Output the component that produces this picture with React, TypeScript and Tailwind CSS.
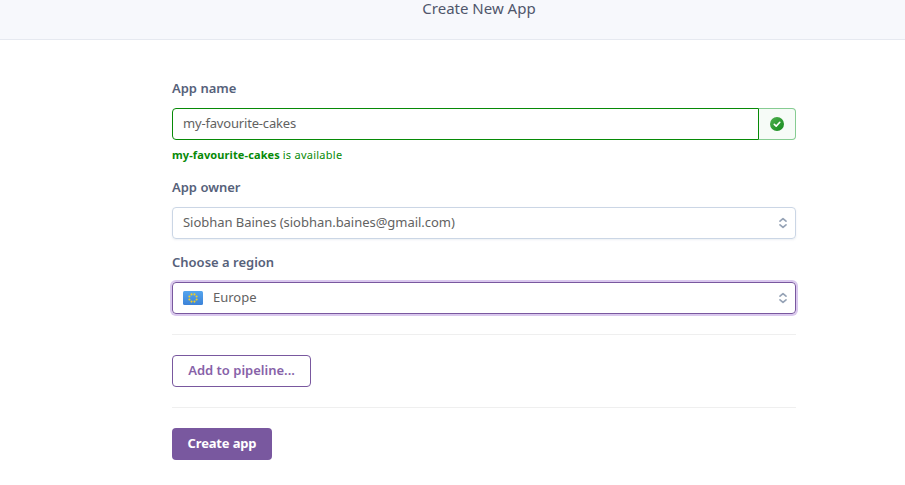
import type { ReactNode } from 'react';

function Label({ children, className = '' }: { children: ReactNode; className?: string }) {
  return (
    <label className={`mb-[10px] block h-5 text-[13px] leading-5 font-semibold text-[#56617a] ${className}`}>
      {children}
    </label>
  );
}

function Chevrons() {
  return (
    <svg
      className="ml-auto shrink-0"
      width="10"
      height="12"
      viewBox="0 0 10 12"
      fill="none"
      stroke="#96a3b6"
      strokeWidth="1.7"
      strokeLinecap="round"
      strokeLinejoin="round"
    >
      <path d="M2 4.2 5 1.7 8 4.2M2 7.8 5 10.3 8 7.8" />
    </svg>
  );
}

const stars = Array.from({ length: 8 }, (_, i) => ({
  x: 10 + 3.9 * Math.cos(((i + 0.5) * Math.PI) / 4),
  y: 7 + 3.9 * Math.sin(((i + 0.5) * Math.PI) / 4),
}));

function EuropeFlag() {
  return (
    <svg className="mr-[10px] shrink-0" width="20" height="14" viewBox="0 0 20 14">
      <defs>
        <linearGradient id="flag" x1="0" y1="0" x2="0" y2="1">
          <stop offset="0" stopColor="#55a5ee" />
          <stop offset="1" stopColor="#3c82d8" />
        </linearGradient>
      </defs>
      <rect width="20" height="14" rx="1.5" fill="url(#flag)" />
      {stars.map((s, i) => (
        <circle key={i} cx={s.x} cy={s.y} r="1.05" fill="#f2cf22" />
      ))}
    </svg>
  );
}

function CheckBadge() {
  return (
    <svg width="14" height="14" viewBox="0 0 14 14">
      <defs>
        <linearGradient id="check" x1="0" y1="0" x2="1" y2="1">
          <stop offset="0" stopColor="#4fb04f" />
          <stop offset="1" stopColor="#148a1c" />
        </linearGradient>
      </defs>
      <circle cx="7" cy="7" r="7" fill="url(#check)" />
      <path
        d="M4.3 7.3 6.2 9.1 9.8 5.3"
        fill="none"
        stroke="#fff"
        strokeWidth="1.6"
        strokeLinecap="round"
        strokeLinejoin="round"
      />
    </svg>
  );
}

export default function App() {
  return (
    <div className="h-[485px] overflow-hidden bg-white font-['Noto_Sans',sans-serif]">
      <header className="flex h-10 justify-center border-b border-[#e6e9f0] bg-[#f7f8fc] pl-[53px]">
        <h1 className="h-4 text-[15px] leading-4 text-[#4f566b]">Create New App</h1>
      </header>

      <main className="ml-[172px] w-[624px] pt-[38px]">
        <Label>App name</Label>
        <div className="flex h-8">
          <div className="flex w-[587px] items-center rounded-l-[4px] border border-[#078a07] px-[10px] text-[13px] tracking-[-0.18px] text-[#626262]">
            <span>my-favourite-cakes</span>
          </div>
          <div className="flex flex-1 items-center justify-center rounded-r-[4px] border border-l-0 border-[#86cc92] bg-[#f6fbf7]">
            <CheckBadge />
          </div>
        </div>
        <p className="mt-[5px] h-5 text-[11px] leading-5 text-[#078a07]">
          <b className="font-bold tracking-[0.11px]">my-favourite-cakes</b>{' '}
          <span className="tracking-[0.25px]">is available</span>
        </p>

        <Label className="mt-3">App owner</Label>
        <div className="flex h-8 items-center rounded-[4px] border border-[#cbd6e5] pr-[7px] pl-[10px] text-[13px] tracking-[-0.03px] text-[#626262] shadow-[0_1px_2px_rgba(100,120,160,0.12)]">
          <span>Siobhan Baines (siobhan.baines@gmail.com)</span>
          <Chevrons />
        </div>

        <Label className="mt-[13px]">Choose a region</Label>
        <div className="flex h-8 items-center rounded-[4px] border border-[#79589f] pr-[7px] pl-[10px] text-[13px] text-[#626262] shadow-[0_0_0_2px_#dac8ee]">
          <EuropeFlag />
          <span>Europe</span>
          <Chevrons />
        </div>

        <hr className="mt-5 border-[#efefef]" />
        <button className="mt-5 flex h-8 w-[139px] items-center justify-center rounded-[4px] border border-[#79589f] text-[13px] font-semibold text-[#8762a8]">
          <span>Add to pipeline...</span>
        </button>
        <hr className="mt-5 border-[#efefef]" />
        <button className="mt-5 flex h-8 w-[100px] items-center justify-center rounded-[4px] bg-[#79589f] text-[13px] font-bold tracking-[-0.16px] text-white">
          <span>Create app</span>
        </button>
      </main>
    </div>
  );
}
